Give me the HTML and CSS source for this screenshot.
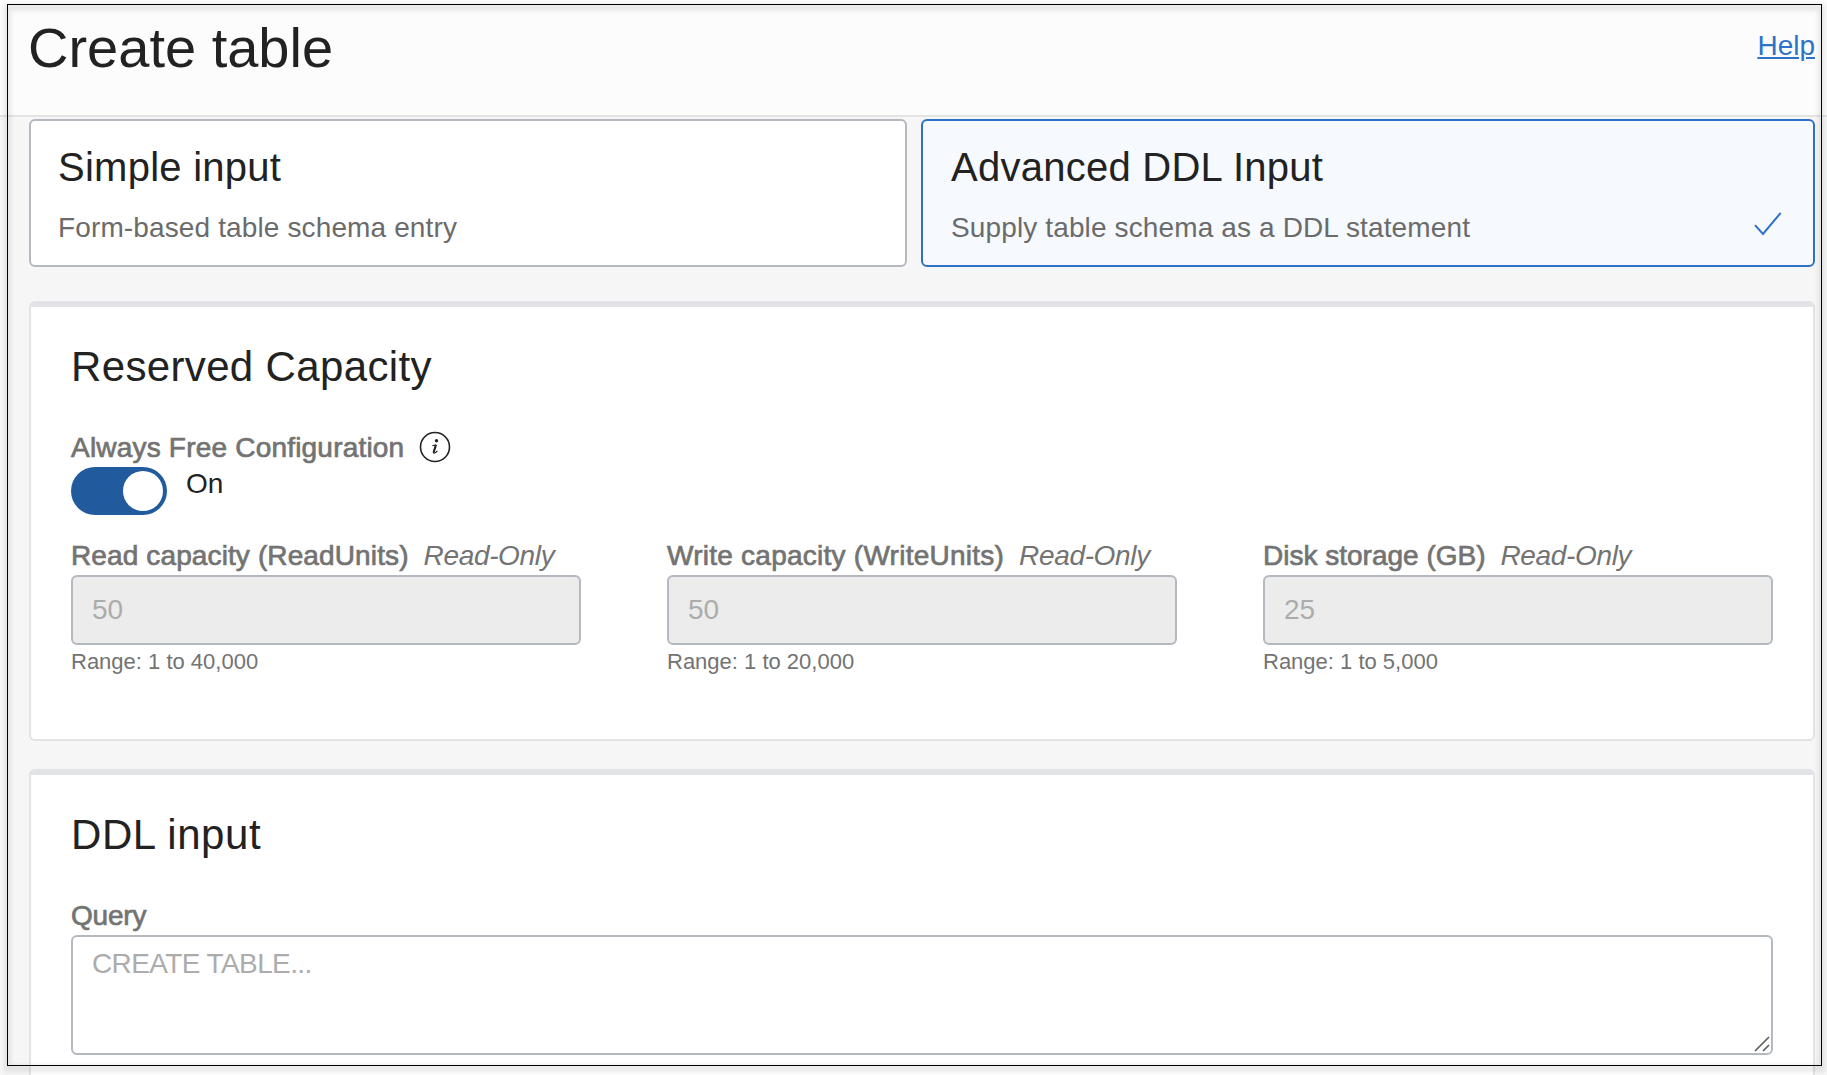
FILE: index.html
```html
<!DOCTYPE html>
<html lang="en">
<head>
<meta charset="utf-8">
<title>Create table</title>
<link rel="stylesheet" href="styles.css">
</head>
<body>
<header class="header">
  <h1 class="title">Create table</h1>
  <a class="help" href="#">Help</a>
</header>
<main class="content">
  <div class="choices">
    <section class="choice choice-simple">
      <h2 class="choice-title">Simple input</h2>
      <p class="choice-text">Form-based table schema entry</p>
    </section>
    <section class="choice choice-selected">
      <div>
        <h2 class="choice-title">Advanced DDL Input</h2>
        <p class="choice-text">Supply table schema as a DDL statement</p>
      </div>
      <svg class="check" width="28" height="26" viewBox="0 0 28 26"><path d="M1 14.2 9 23 26.7 1.8" fill="none" stroke="#2d72c9" stroke-width="2"/></svg>
    </section>
  </div>
  <section class="panel panel-capacity">
    <h2 class="panel-title">Reserved Capacity</h2>
    <div class="label-row">
      <span class="label">Always Free Configuration</span>
      <svg class="info" width="32" height="32" viewBox="0 0 32 32"><circle cx="16" cy="16" r="14.5" fill="none" stroke="#222" stroke-width="1.6"/><circle cx="17.5" cy="9.7" r="1.7" fill="#222"/><path d="M13.3 14.7 16.6 14M14.6 21.5Q15.5 23 18.4 19.8" fill="none" stroke="#222" stroke-width="1.1"/><path d="M17 13.6 14.9 20.4Q14.6 21.8 15.5 21.8" fill="none" stroke="#222" stroke-width="2.1"/></svg>
    </div>
    <div class="toggle-row">
      <span class="toggle"><span class="knob"></span></span>
      <span class="toggle-text">On</span>
    </div>
    <div class="fields">
      <div class="field">
        <div class="field-label"><span class="label label-read">Read capacity (ReadUnits)</span><em class="hint">Read-Only</em></div>
        <input class="input" value="50" readonly>
        <div class="range">Range: 1 to 40,000</div>
      </div>
      <div class="field">
        <div class="field-label"><span class="label label-write">Write capacity (WriteUnits)</span><em class="hint">Read-Only</em></div>
        <input class="input" value="50" readonly>
        <div class="range">Range: 1 to 20,000</div>
      </div>
      <div class="field">
        <div class="field-label"><span class="label label-disk">Disk storage (GB)</span><em class="hint">Read-Only</em></div>
        <input class="input" value="25" readonly>
        <div class="range">Range: 1 to 5,000</div>
      </div>
    </div>
  </section>
  <section class="panel panel-ddl">
    <h2 class="panel-title">DDL input</h2>
    <div class="label-row"><span class="label label-query">Query</span></div>
    <div class="query">
      <textarea class="textarea" placeholder="CREATE TABLE..."></textarea>
      <svg class="grip" width="16" height="16" viewBox="0 0 16 16"><path d="M1 15 15 1M9 15 15 9" stroke="#5c5c5c" stroke-width="1.6"/></svg>
    </div>
  </section>
</main>
<div class="frame"></div>
</body>
</html>
```
FILE: styles.css
```css
* {
  box-sizing: border-box;
}

body {
  margin: 0;
  height: 1075px;
  overflow: hidden;
  position: relative;
  background: #f6f6f6;
  color: #222;
  font-family: "Liberation Sans", Arial, sans-serif;
  font-size: 28px;
  line-height: 33px;
}

h1, h2, p {
  margin: 0;
  font-weight: 400;
}

.header {
  display: flex;
  justify-content: space-between;
  height: 117px;
  padding: 16px 12px 0 28px;
  background: #fcfcfc;
  border-bottom: 2px solid #e4e4e4;
}

.title {
  font-size: 56px;
  line-height: 64px;
}

.help {
  margin-top: 13px;
  color: #2d72c9;
  text-decoration-thickness: 2px;
  text-underline-offset: 2px;
}

.content {
  padding: 2px 12px 0 29px;
}

.choices {
  display: grid;
  grid-template-columns: 878px 894px;
  gap: 14px;
}

.choice {
  height: 148px;
  padding: 22px 28px 0;
  background: #fff;
  border: 2px solid #b4b8bf;
  border-radius: 6px;
}

.choice-simple {
  padding-left: 27px;
}

.choice-selected {
  display: flex;
  justify-content: space-between;
  padding-right: 31px;
  background: #f6f9fe;
  border-color: #2d72c9;
}

.choice-title {
  font-size: 40px;
  line-height: 48px;
  letter-spacing: 0.25px;
}

.choice-text {
  margin-top: 20px;
  color: #6b6b6b;
  letter-spacing: 0.13px;
}

.check {
  margin-top: 68px;
}

.panel {
  padding: 34px 40px 0;
  background: #fff;
  border: 2px solid #e2e3e7;
  border-top-width: 6px;
  border-radius: 6px;
}

.panel-capacity {
  height: 440px;
  margin-top: 34px;
}

.panel-ddl {
  height: 330px;
  margin-top: 28px;
}

.panel-title {
  margin-bottom: 39px;
  font-size: 42px;
  line-height: 51px;
  letter-spacing: 0.35px;
}

.panel-ddl .panel-title {
  letter-spacing: 0.55px;
}

.label-row {
  display: flex;
  gap: 15px;
  height: 32px;
  margin-bottom: 4px;
}

.label {
  color: #737373;
  letter-spacing: 0.2px;
  -webkit-text-stroke: 0.7px #737373;
}

.label-read {
  letter-spacing: 0.12px;
}

.label-write {
  letter-spacing: 0.25px;
}

.label-disk {
  letter-spacing: 0;
}

.label-query {
  letter-spacing: -0.2px;
}

.toggle-row {
  display: flex;
  gap: 19px;
}

.toggle {
  display: flex;
  justify-content: flex-end;
  width: 96px;
  height: 48px;
  padding: 4px;
  background: #225a9e;
  border-radius: 24px;
}

.knob {
  width: 40px;
  height: 40px;
  background: #fff;
  border-radius: 50%;
}

.fields {
  display: grid;
  grid-template-columns: repeat(3, 510px);
  gap: 86px;
  margin-top: 24px;
}

.field-label {
  display: flex;
  gap: 15px;
  margin-bottom: 3px;
}

.hint {
  color: #737373;
  letter-spacing: -0.35px;
}

.input {
  display: block;
  width: 100%;
  height: 70px;
  padding: 0 19px;
  background: #ececec;
  border: 2px solid #b4b8bf;
  border-radius: 6px;
  color: #acacac;
  font: inherit;
  outline: none;
}

.range {
  margin-top: 2px;
  color: #737373;
  font-size: 22px;
  line-height: 29px;
}

.query {
  position: relative;
}

.textarea {
  display: block;
  width: 100%;
  height: 120px;
  padding: 10px 19px;
  background: #fff;
  border: 2px solid #b4b8bf;
  border-radius: 6px;
  font: inherit;
  letter-spacing: -0.6px;
  resize: none;
}

.textarea::placeholder {
  color: #acacac;
}

.grip {
  position: absolute;
  right: 3px;
  bottom: 3px;
}

/* Outline laid over the whole page, with a soft shadow under its line */
.frame {
  position: absolute;
  top: 4px;
  left: 7px;
  width: 1815px;
  height: 1062px;
  border: 1px solid #000;
  pointer-events: none;
}

.frame::before {
  content: "";
  position: absolute;
  inset: -1px -4px -7px;
  border: 7px solid rgba(0, 0, 0, 0.08);
  filter: blur(2px);
}
```
